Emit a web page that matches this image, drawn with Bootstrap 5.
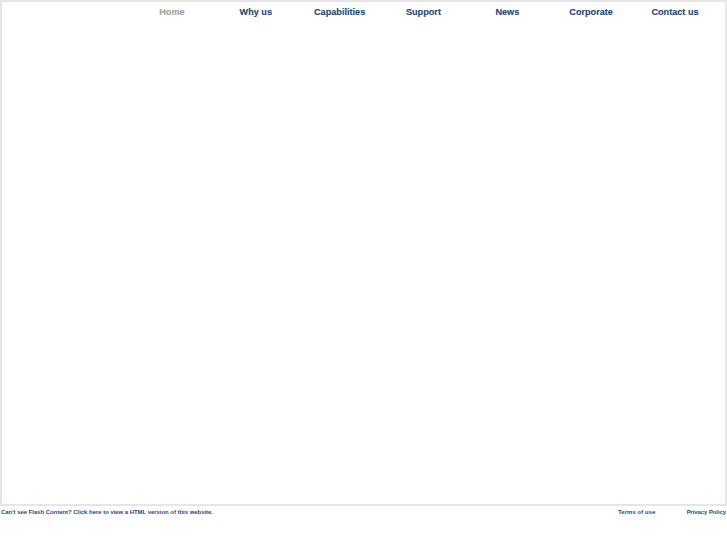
<!DOCTYPE html>
<html lang="en">
<head>
<meta charset="utf-8">
<title>Home</title>
<link href="https://cdn.jsdelivr.net/npm/bootstrap@5.3.0/dist/css/bootstrap.min.css" rel="stylesheet">
<style>
html, body { background: #fff; }
body { font-family: "Liberation Sans", Arial, sans-serif; height: 545px; overflow: hidden; }
.stage { width: 727px; height: 506px; border: 2px solid #e6e6e6; padding-left: 128px; }
.menu-cell { width: 83.85px; height: 22px; font-size: 9.15px; font-weight: 700; color: #1f4a78; text-decoration: none; -webkit-text-stroke: 0.15px currentColor; }
.menu-cell.active-item { color: #a3a3a3; }
.foot { width: 727px; font-size: 5.92px; font-weight: 700; color: #1f4a78; height: 13px; padding-left: 1px; padding-right: 1px; }
.foot a { color: #1f4a78; text-decoration: none; }
.foot-right { width: 108px; }
.foot-right a:first-child { letter-spacing: 0.1px; }
.foot-right a:last-child { letter-spacing: -0.05px; }
</style>
</head>
<body class="m-0">
<div class="stage">
  <nav class="d-flex">
    <a class="menu-cell active-item d-flex align-items-center justify-content-center" href="#">Home</a>
    <a class="menu-cell d-flex align-items-center justify-content-center" href="#">Why us</a>
    <a class="menu-cell d-flex align-items-center justify-content-center" href="#">Capabilities</a>
    <a class="menu-cell d-flex align-items-center justify-content-center" href="#">Support</a>
    <a class="menu-cell d-flex align-items-center justify-content-center" href="#">News</a>
    <a class="menu-cell d-flex align-items-center justify-content-center" href="#">Corporate</a>
    <a class="menu-cell d-flex align-items-center justify-content-center" href="#">Contact us</a>
  </nav>
</div>
<div class="foot d-flex justify-content-between align-items-center">
  <a href="#">Can't see Flash Content? Click here to view a HTML version of this website.</a>
  <div class="foot-right d-flex justify-content-between">
    <a href="#">Terms of use</a>
    <a href="#">Privacy Policy</a>
  </div>
</div>
<script src="https://cdn.jsdelivr.net/npm/bootstrap@5.3.0/dist/js/bootstrap.bundle.min.js"></script>
</body>
</html>
